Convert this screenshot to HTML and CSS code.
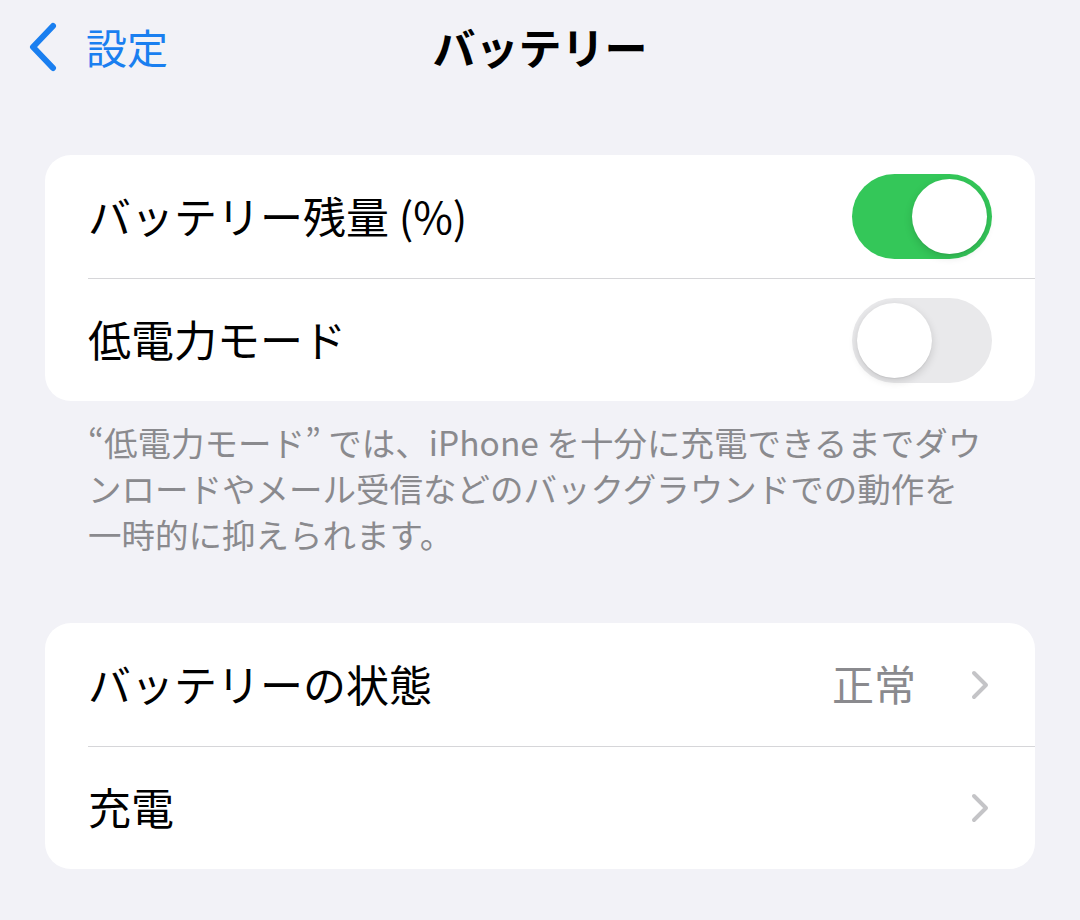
FILE: index.html
```html
<!DOCTYPE html>
<html lang="ja">
<head>
    <meta charset="UTF-8">
    <meta name="viewport" content="width=device-width, initial-scale=1.0">
    <title>バッテリー</title>
    <link rel="stylesheet" href="styles.css">
</head>
<body>
    <header class="nav-bar">
        <a class="back" href="#">
            <svg class="back-chevron" width="30" height="50" viewBox="0 0 30 50">
                <path d="M25 4 L5 25 L25 46" fill="none" stroke="currentColor" stroke-width="6" stroke-linecap="round" stroke-linejoin="round"/>
            </svg>
            <span>設定</span>
        </a>
        <h1 class="nav-title">バッテリー</h1>
        <div></div>
    </header>

    <main class="content">
        <section class="group">
            <div class="row">
                <span class="label">バッテリー残量 (%)</span>
                <span class="switch on"><span class="knob"></span></span>
            </div>
            <div class="row">
                <span class="label">低電力モード</span>
                <span class="switch"><span class="knob"></span></span>
            </div>
        </section>
        <p class="group-footer">“低電力モード” では、iPhone を十分に充電できるまでダウ<br>ンロードやメール受信などのバックグラウンドでの動作を<br>一時的に抑えられます。</p>

        <section class="group">
            <a class="row link" href="#">
                <span class="label">バッテリーの状態</span>
                <span class="detail">正常</span>
                <svg class="chevron" width="20" height="32" viewBox="0 0 20 32">
                    <path d="M4 4 L16 16 L4 28" fill="none" stroke="currentColor" stroke-width="4" stroke-linecap="round" stroke-linejoin="round"/>
                </svg>
            </a>
            <a class="row link" href="#">
                <span class="label">充電</span>
                <svg class="chevron" width="20" height="32" viewBox="0 0 20 32">
                    <path d="M4 4 L16 16 L4 28" fill="none" stroke="currentColor" stroke-width="4" stroke-linecap="round" stroke-linejoin="round"/>
                </svg>
            </a>
        </section>
    </main>
</body>
</html>
```

FILE: styles.css
```css
body { margin: 0; background: #f2f2f7; font-family: "Noto Sans CJK JP", "Noto Sans", sans-serif; color: #000; }
a { color: inherit; text-decoration: none; }

/* top navigation */
.nav-bar { display: grid; grid-template-columns: 1fr auto 1fr; align-items: center; height: 92px; padding: 0 28px; }
.back { display: flex; align-items: center; gap: 28px; color: #1a7ff0; font-size: 41px; line-height: 1; }
.back-chevron { display: block; margin-top: 2px; }
.nav-title { margin: 0; font-size: 43px; font-weight: 700; line-height: 1; }

/* grouped list */
.content { padding: 63px 45px 0; }
.group { background: #fff; border-radius: 26px; overflow: hidden; }
.row { display: flex; align-items: center; height: 123px; margin-left: 43px; padding-right: 43px; box-sizing: border-box; }
.row + .row { border-top: 1px solid #d6d6d9; }
.label { flex: 1; font-size: 43px; line-height: 1; margin-top: -3px; }
.detail { font-size: 42px; line-height: 1; color: #8a8a8e; margin-right: 54px; margin-top: -3px; }
.chevron { display: block; color: #c4c4c7; margin-right: 2px; }

.group-footer { margin: 0 0 66px; padding: 18px 43px 0; font-size: 33.5px; line-height: 46px; color: #8a8a8e; }

/* toggle switch */
.switch { position: relative; width: 140px; height: 85px; border-radius: 43px; background: #e9e9eb; }
.switch.on { background: #34c759; }
.knob { position: absolute; top: 5px; left: 5px; width: 75px; height: 75px; border-radius: 50%; background: #fff; box-shadow: 0 3px 8px rgba(0,0,0,0.15), 0 1px 1px rgba(0,0,0,0.06); }
.switch.on .knob { left: 60px; }
```
